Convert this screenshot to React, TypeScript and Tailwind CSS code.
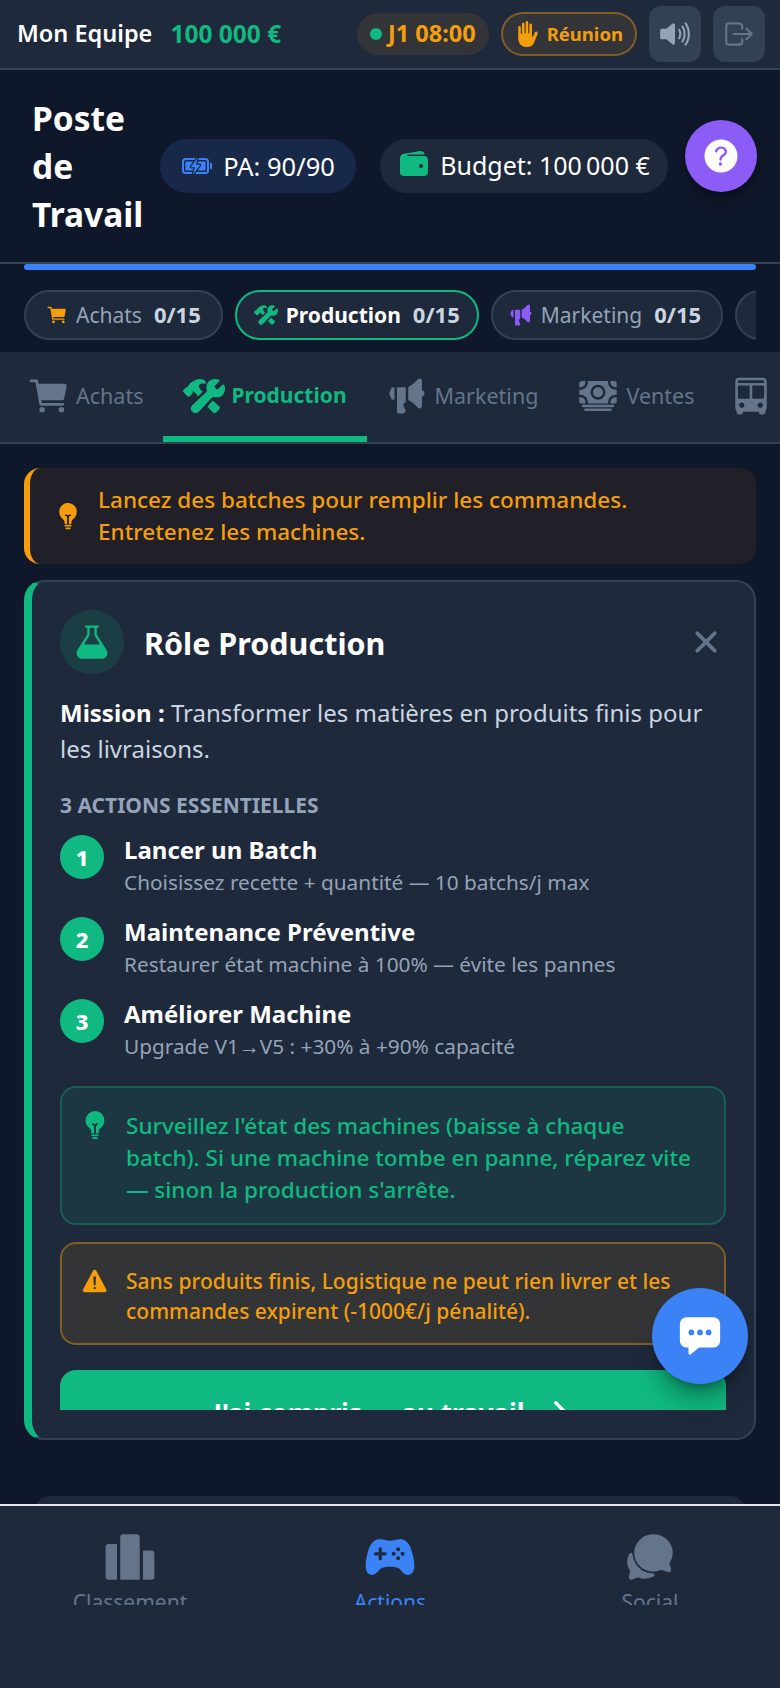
import type { ReactNode } from "react";
import {
  IoArrowForward,
  IoBatteryCharging,
  IoBulb,
  IoBus,
  IoCart,
  IoCash,
  IoChatboxEllipses,
  IoChatbubbles,
  IoClose,
  IoConstruct,
  IoFlask,
  IoGameController,
  IoHandLeft,
  IoHelpCircle,
  IoLogOutOutline,
  IoMegaphone,
  IoPodium,
  IoVolumeHigh,
  IoWallet,
  IoWarning,
} from "react-icons/io5";

const ACTIONS = [
  { title: "Lancer un Batch", desc: "Choisissez recette + quantité — 10 batchs/j max" },
  { title: "Maintenance Préventive", desc: "Restaurer état machine à 100% — évite les pannes" },
  { title: "Améliorer Machine", desc: "Upgrade V1→V5 : +30% à +90% capacité" },
];

function TopBar() {
  return (
    <header className="flex h-[70px] shrink-0 items-center border-b-2 border-[#334155] bg-[#1e293b] pl-[17px] pr-[15px]">
      <span className="text-[23.5px] font-semibold text-white">Mon Equipe</span>
      <span className="ml-[18px] text-[24.5px] font-bold text-[#10b981]">100 000 €</span>
      <div className="ml-auto flex items-center gap-3">
        <div className="flex h-[42px] items-center gap-1.5 rounded-full bg-[#333438] px-[13px] text-[23.5px] font-bold text-[#f59e0b]">
          <span className="h-3 w-3 rounded-full bg-[#10b981]" />
          J1 08:00
        </div>
        <div className="flex h-[44px] items-center gap-1.5 rounded-full border-2 border-[#f59e0b]/40 bg-[#333438] px-3 text-[18.5px] font-bold text-[#f59e0b]">
          <IoHandLeft className="text-[26px]" />
          Réunion
        </div>
        <button className="flex h-[56px] w-[52px] items-center justify-center rounded-xl bg-[#334155] text-[#94a3b8]">
          <IoVolumeHigh className="text-[34px]" />
        </button>
        <button className="flex h-[56px] w-[52px] items-center justify-center rounded-xl bg-[#334155] text-[#64748b]">
          <IoLogOutOutline className="text-[34px]" />
        </button>
      </div>
    </header>
  );
}

function TitleBar() {
  return (
    <section className="flex h-[194px] shrink-0 items-center border-b-2 border-[#334155] pl-8 pr-[23px]">
      <h1 className="w-[128px] text-[33.5px] font-bold leading-[48px] text-white">Poste de Travail</h1>
      <div className="flex h-[54px] w-[196px] items-center justify-center gap-2.5 rounded-full bg-[#172849] text-[25.5px] text-white">
        <IoBatteryCharging className="text-[32px] text-[#3b82f6]" />
        PA: 90/90
      </div>
      <div className="ml-6 flex h-[54px] w-[288px] items-center justify-center gap-2.5 rounded-full bg-[#1e293b] text-[25px] text-white">
        <IoWallet className="-mt-1 text-[32px] text-[#10b981]" />
        {"Budget: 100\u202f000 €"}
      </div>
      <button className="-mt-5 ml-auto flex h-[72px] w-[72px] items-center justify-center rounded-full bg-[#8b5cf6] text-white shadow-lg shadow-black/30">
        <IoHelpCircle className="text-[44px]" />
      </button>
    </section>
  );
}

function QuotaPill({ icon, label, active }: { icon: ReactNode; label: string; active?: boolean }) {
  return (
    <div
      className={`flex h-[50px] shrink-0 items-center gap-2 rounded-full border-2 bg-[#1e293b] text-[21px] ${
        active ? "border-[#10b981] px-[17px]" : "border-[#334155] px-5"
      }`}
    >
      {icon}
      <span className="flex items-baseline gap-3">
        <span className={active ? "font-bold text-white" : "text-[#94a3b8]"}>{label}</span>
        <span className="text-[22px] font-bold text-[#cbd5e1]">0/15</span>
      </span>
    </div>
  );
}

function Tab({ icon, label, active }: { icon: ReactNode; label?: string; active?: boolean }) {
  return (
    <div
      className={`flex h-full shrink-0 items-center border-b-[6px] px-5 pt-1 ${
        active ? "gap-1.5 border-[#10b981] text-[21px] font-bold text-[#10b981]" : "gap-2 border-transparent text-[21.5px] text-[#64748b]"
      }`}
    >
      {icon}
      {label}
    </div>
  );
}

function RoleCard() {
  return (
    <div className="mt-4 rounded-[20px] border-2 border-l-8 border-[#334155] border-l-[#10b981] bg-[#1e293b] p-7">
      <div className="h-[800px] overflow-hidden">
        <div className="flex h-16 items-center">
          <div className="flex h-16 w-16 items-center justify-center rounded-full bg-[#10b981]/15">
            <IoFlask className="text-[38px] text-[#10b981]" />
          </div>
          <h2 className="ml-5 mt-1 text-[30.5px] font-bold text-white">Rôle Production</h2>
          <IoClose className="ml-auto text-[40px] text-[#64748b]" />
        </div>
        <p className="mt-[21px] text-[24px] leading-9 text-[#cbd5e1]">
          <strong className="font-bold text-white">Mission :</strong> Transformer les matières en produits finis pour les
          livraisons.
        </p>
        <h3 className="mt-[22px] text-[21px] font-bold uppercase leading-8 text-[#94a3b8]">3 actions essentielles</h3>
        <ul className="mt-3.5 flex flex-col gap-5">
          {ACTIONS.map((action, i) => (
            <li key={action.title} className="flex gap-5">
              <span className="flex h-11 w-11 shrink-0 items-center justify-center rounded-full bg-[#10b981] text-[22px] font-extrabold text-white">
                {i + 1}
              </span>
              <div className="-mt-0.5">
                <div className="text-[24px] font-bold leading-[34px] text-white">{action.title}</div>
                <div className="text-[20.8px] leading-[30px] text-[#94a3b8]">{action.desc}</div>
              </div>
            </li>
          ))}
        </ul>
        <div className="mt-[25px] flex gap-4 rounded-2xl border-2 border-[#10b981]/30 bg-[#10b981]/10 pb-[17px] pl-[22px] pr-[27px] pt-[22px] text-[22.5px] font-medium leading-8 text-[#10b981]">
          <IoBulb className="-ml-1 shrink-0 text-[30px]" />
          <p>Surveillez l'état des machines (baisse à chaque batch). Si une machine tombe en panne, réparez vite — sinon la production s'arrête.</p>
        </div>
        <div className="mt-[17px] flex gap-4 rounded-2xl border-2 border-[#f59e0b]/40 bg-[#f59e0b]/10 pb-[17px] pl-[22px] pr-4 pt-[22px] text-[21px] font-medium leading-[30px] text-[#f59e0b]">
          <IoWarning className="-ml-1 shrink-0 text-[30px]" />
          <p>Sans produits finis, Logistique ne peut rien livrer et les commandes expirent (-1000€/j pénalité).</p>
        </div>
        <button className="mt-[25px] flex h-[86px] w-full items-center justify-center gap-3 rounded-2xl bg-[#10b981] text-[26px] font-bold text-white">
          J'ai compris — au travail
          <IoArrowForward className="text-[36px]" />
        </button>
      </div>
    </div>
  );
}

function NavItem({ icon, label, active }: { icon: ReactNode; label: string; active?: boolean }) {
  return (
    <div className={`flex h-[74px] flex-col items-center overflow-hidden ${active ? "text-[#3b82f6]" : "text-[#64748b]"}`}>
      <div className="shrink-0">{icon}</div>
      <span className="mt-[3px] shrink-0 text-[21px] leading-8">{label}</span>
    </div>
  );
}

export default function App() {
  return (
    <div className="relative flex h-[1688px] flex-col overflow-hidden bg-[#0f172a] font-['Noto_Sans',sans-serif]">
      <TopBar />
      <TitleBar />
      <div className="mx-6 h-1.5 shrink-0 rounded-full bg-[#3b82f6]" />

      <div className="mx-6 mt-5 flex shrink-0 gap-3 overflow-hidden">
        <QuotaPill icon={<IoCart className="text-[22px] text-[#f59e0b]" />} label="Achats" />
        <QuotaPill icon={<IoConstruct className="text-[24px] text-[#10b981]" />} label="Production" active />
        <QuotaPill icon={<IoMegaphone className="-ml-1 text-[24px] text-[#8b5cf6]" />} label="Marketing" />
        <QuotaPill icon={<IoCash className="text-[20px] text-[#3b82f6]" />} label="Ventes" />
      </div>

      <nav className="mt-3 flex h-[92px] shrink-0 overflow-hidden border-b-2 border-[#334155] bg-[#1e293b] pl-[10px]">
        <Tab icon={<IoCart className="-mx-[3px] text-[44px]" />} label="Achats" />
        <Tab icon={<IoConstruct className="text-[42px]" />} label="Production" active />
        <Tab icon={<IoMegaphone className="text-[40px]" />} label="Marketing" />
        <Tab icon={<IoCash className="text-[40px]" />} label="Ventes" />
        <Tab icon={<IoBus className="-ml-1 text-[42px]" />} />
      </nav>

      <main className="min-h-0 flex-1 overflow-hidden px-6 pt-6">
        <div className="flex h-24 items-center gap-4 rounded-2xl border-l-[6px] border-[#f59e0b] bg-[#212028] pl-6 text-[22.5px] font-medium leading-8 text-[#f59e0b]">
          <IoBulb className="shrink-0 text-[28px]" />
          <p>
            Lancez des batches pour remplir les commandes.
            <br />
            Entretenez les machines.
          </p>
        </div>
        <RoleCard />
        <div className="mx-[10px] mt-14 h-20 rounded-2xl bg-[#1e293b]" />
      </main>

      <footer className="grid h-[184px] shrink-0 grid-cols-3 border-t-2 border-[#e5e7eb] bg-[#1e293b] pt-[25px]">
        <NavItem icon={<IoPodium className="text-[52px]" />} label="Classement" />
        <NavItem icon={<IoGameController className="text-[52px]" />} label="Actions" active />
        <NavItem icon={<IoChatbubbles className="text-[52px]" />} label="Social" />
      </footer>

      <button className="absolute left-[652px] top-[1288px] flex h-24 w-24 items-center justify-center rounded-full bg-[#3b82f6] text-white shadow-xl shadow-black/30">
        <IoChatboxEllipses className="text-[46px]" />
      </button>
    </div>
  );
}
